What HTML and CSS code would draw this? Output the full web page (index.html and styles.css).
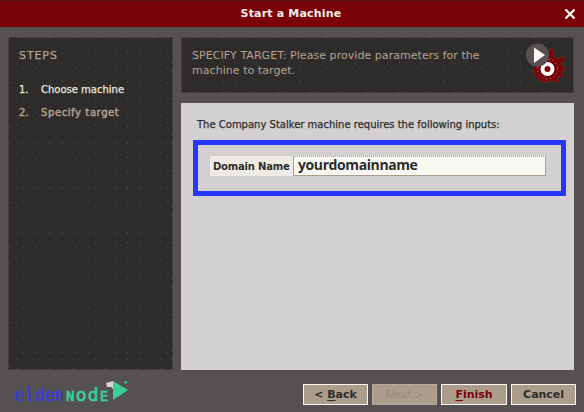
FILE: index.html
```html
<!DOCTYPE html>
<html lang="en">
<head>
<meta charset="utf-8">
<title>Start a Machine</title>
<link rel="stylesheet" href="styles.css">
</head>
<body>
<div class="window">
  <header class="titlebar">
    <h1>Start a Machine</h1>
    <svg class="close" width="12" height="12" viewBox="0 0 12 12"><path d="M1.500 1.500 10.500 10.500M10.500 1.500 1.500 10.500"/></svg>
  </header>
  <main class="body">
    <aside class="steps">
      <h2>STEPS</h2>
      <ol>
        <li><span class="num">1.</span><span class="choose">Choose machine</span></li>
        <li class="current"><span class="num">2.</span><span class="specify">Specify target</span></li>
      </ol>
    </aside>
    <section class="right">
      <div class="banner">
        <p>SPECIFY TARGET: Please provide parameters for the<br>machine to target.</p>
        <svg class="gear" width="42" height="46" viewBox="0 0 42 46">
          <path class="cog" d="M10 18 22 14 25 8 29 9 28 15 31 18 40 16 36 23 40 28 36 31 38 35 32 36 34 42 27 39 22 41 15 40 10 34 9 27Z"/>
          <circle class="specks" cx="22.500" cy="28" r="10"/>
          <circle class="ring" cx="22.500" cy="28" r="5"/>
          <circle class="disc" cx="12.500" cy="14" r="11.500"/>
          <path class="play" d="M9 6.500V22L20 14Z"/>
        </svg>
      </div>
      <div class="content">
        <p class="prompt">The Company Stalker machine requires the following inputs:</p>
        <div class="field">
          <label for="domain">Domain Name</label>
          <div class="input" id="domain"><span>yourdomainname</span></div>
        </div>
      </div>
    </section>
  </main>
  <footer class="footer">
    <svg class="logo" width="124" height="32" viewBox="0 0 124 32">
      <text class="elder" x="6" y="25">elde<tspan class="small">R</tspan></text>
      <text class="node" x="58" y="25"><tspan class="small">N</tspan>od<tspan class="small">E</tspan></text>
      <path class="arrow" d="M105 5 120 14 105 24ZM115 6 119 5V8Z"/>
      <path class="cap" d="M98 7 105 5V13L103 11 99 11Z"/>
    </svg>
    <div class="buttons">
      <button class="back"><span>&lt; <u>B</u>ack</span></button>
      <button class="next" disabled><span>Next &gt;</span></button>
      <button class="finish"><span><u>F</u>inish</span></button>
      <button class="cancel"><span>Cancel</span></button>
    </div>
  </footer>
</div>
</body>
</html>
```
FILE: styles.css
```css
* { box-sizing: border-box; }
body { margin: 0; font-family: "DejaVu Sans", sans-serif; }
h1, h2, p, ol { margin: 0; padding: 0; }
.window { width: 584px; height: 412px; display: flex; flex-direction: column; background: #555152; overflow: hidden; }
.titlebar { height: 27px; flex: none; background: #780206; border-top: 1px solid #4a1516; display: flex; align-items: center; justify-content: center; position: relative; }
h1 { font-size: 11px; line-height: 26px; font-weight: bold; color: #f4efea; letter-spacing: .18px; margin-left: -2px; }
.close { position: absolute; right: 8px; top: 7px; fill: none; stroke: #fff; stroke-width: 2.2; }
.body { display: flex; gap: 8px; padding: 10px 10px 0 8px; height: 343px; flex: none; }
.steps, .banner {
  background-color: #2e2c2b;
  background-image: radial-gradient(circle, #484546 .6px, transparent .7px), radial-gradient(circle, #484546 .6px, transparent .7px);
  background-size: 11px 9px, 13px 15px;
  background-position: 3px 2px, 8px 7px;
  border: 1px dotted #555152;
}
.steps { width: 165px; padding: 11px 10px; flex: none; }
h2 { font-size: 11px; line-height: 14px; font-weight: normal; color: #b5a18e; letter-spacing: .9px; -webkit-text-stroke: .25px #b5a18e; }
ol { list-style: none; margin-top: 20px; }
li { display: flex; font-size: 10px; line-height: 14px; height: 23px; color: #eee6de; -webkit-text-stroke: .25px currentColor; }
li.current { color: #b5a18e; -webkit-text-stroke-width: .45px; }
.num { width: 22px; flex: none; }
.specify { letter-spacing: .6px; }
.right { flex: 1; display: flex; flex-direction: column; gap: 10px; }
.banner { height: 56px; display: flex; justify-content: space-between; padding: 10px 6px 0 10px; font-size: 11px; line-height: 15px; letter-spacing: .05px; color: #b5a18e; }
.banner p { white-space: nowrap; }
.gear { margin: -7px 0 0; flex: none; }
.cog { fill: #780206; stroke: #a22a20; stroke-width: 1; stroke-dasharray: 1 1; }
.specks { fill: none; stroke: #c9a890; stroke-width: 1; stroke-dasharray: 1 3; }
.ring { fill: #780206; stroke: #fff; stroke-width: 4; }
.disc { fill: #555152; }
.play { fill: #fbf7f0; }
.content { flex: 1; background: #d2d0d1; padding: 14px 8px 0 12px; }
.prompt { font-size: 10px; line-height: 14px; color: #2e2c2b; margin: 1px 0 0 4px; white-space: nowrap; -webkit-text-stroke: .25px #2e2c2b; }
.field { height: 56px; margin-top: 8px; border: 5px solid #2837ff; display: flex; padding: 11px 15px 0 12px; }
label { width: 83px; height: 20px; background: #eeebe6; font-size: 10px; font-weight: bold; letter-spacing: -.2px; line-height: 21px; padding-left: 3px; color: #2e2c2b; white-space: nowrap; }
.input { flex: 1; height: 20px; background: #fbf9f3; border: 1px solid #ab9c8c; border-top-style: dotted; padding-left: 4px; font: bold 14px/16px "Open Sans", sans-serif; letter-spacing: -.4px; color: #2e2c2b; }
.footer { flex: 1; display: flex; justify-content: space-between; padding: 14px 8px 0 8px; }
.logo { margin-top: -8px; overflow: visible; }
.logo text { font: 17px "DejaVu Sans Mono", monospace; }
.logo .small { font-size: 14px; }
.elder { fill: #3439ea; }
.logo .node { fill: #39cf97; stroke: #39cf97; stroke-width: .7; font-size: 18px; letter-spacing: 1.2px; }
.arrow { fill: #39cf97; }
.cap { fill: #d8d5d4; }
.buttons { display: flex; gap: 4px; }
button { width: 65px; height: 21px; padding: 0; border: 1px solid #fbf7f0; background: #ab9c8c; color: #2e2c2b; font: bold 11px/18px "DejaVu Sans", sans-serif; letter-spacing: -.05px; }
.next { border: 1px dotted #c3b9ae; color: #988b7e; font-weight: normal; }
.finish { width: 66px; color: #780206; }
u { text-underline-offset: 2px; }
```
